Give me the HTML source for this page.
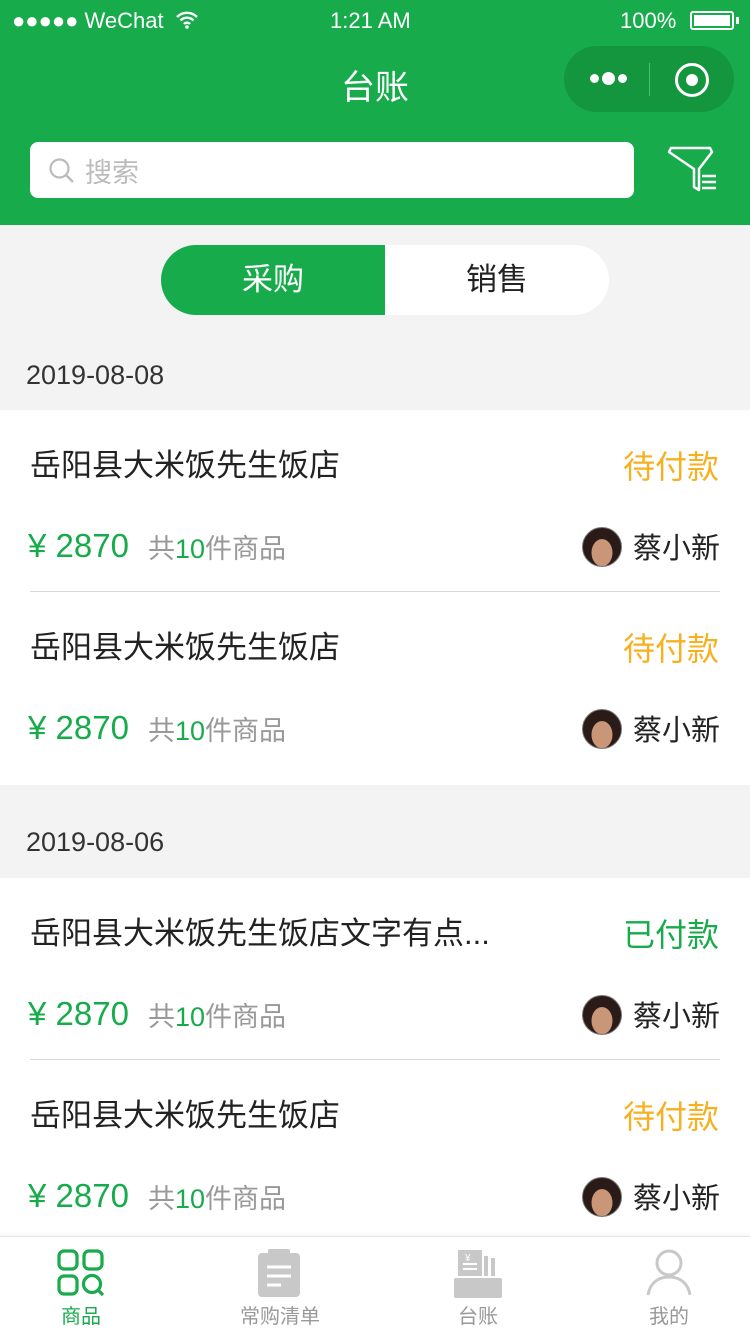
<!DOCTYPE html>
<html><head><meta charset="utf-8"><style>
*{margin:0;padding:0;box-sizing:border-box}
body{width:750px;height:1334px;overflow:hidden;background:#f3f3f3;font-family:"Liberation Sans","Noto Sans CJK SC",sans-serif;position:relative}
.abs{position:absolute}
.hdr{left:0;top:0;width:750px;height:225px;background:#17ab4b;color:#fff}
.item{position:absolute;left:0;width:750px;height:182px}
.t{position:absolute;left:30px;top:30px;font-size:31px;color:#222;white-space:nowrap}
.st{position:absolute;right:31px;top:32px;font-size:32px}
.pr{position:absolute;left:28px;top:117px;font-size:33px;color:#17ab4b}
.cnt{position:absolute;left:148px;top:117px;font-size:27px;color:#999}
.cnt b{font-weight:normal;color:#17ab4b}
.av{position:absolute;left:582px;top:117px;width:40px;height:40px;border-radius:50%;background:radial-gradient(ellipse at 50% 65%,#c99677 0 38%,#2a1a18 40%);border:1px solid #777}
.nm{position:absolute;right:30px;top:115px;font-size:29px;color:#222}
.div{position:absolute;left:30px;right:30px;bottom:0;height:1px;background:#d8d8d8}
.date{position:absolute;left:26px;font-size:27px;color:#333}
.tab{position:absolute;top:1300px;font-size:20px;color:#999;width:120px;text-align:center}
</style></head><body>
<div class="abs hdr">
 <div class="abs" style="left:12px;top:8px;font-size:22px;letter-spacing:0">●●●●● WeChat</div>
 <svg class="abs" style="left:175px;top:11px" width="24" height="18" viewBox="0 0 24 18"><path d="M2 6a14 14 0 0 1 20 0M5.5 9.5a9 9 0 0 1 13 0M9 13a4 4 0 0 1 6 0" stroke="#fff" stroke-width="2.4" fill="none"/><circle cx="12" cy="16" r="1.8" fill="#fff"/></svg>
 <div class="abs" style="left:330px;top:8px;font-size:22px">1:21 AM</div>
 <div class="abs" style="left:620px;top:8px;font-size:22px">100%</div>
 <div class="abs" style="left:690px;top:11px;width:44px;height:19px;border:2px solid #fff;border-radius:3px;padding:2px"><div style="background:#fff;width:100%;height:100%"></div></div>
 <div class="abs" style="left:736px;top:17px;width:3px;height:7px;background:#fff"></div>
 <div class="abs" style="left:0;width:750px;top:60px;text-align:center;font-size:34px">台账</div>
 <div class="abs" style="left:564px;top:46px;width:170px;height:66px;border-radius:33px;background:#14963f"></div>
 <div class="abs" style="left:590px;top:74px;width:9px;height:9px;border-radius:50%;background:#fff"></div>
 <div class="abs" style="left:602px;top:72px;width:13px;height:13px;border-radius:50%;background:#fff"></div>
 <div class="abs" style="left:618px;top:74px;width:9px;height:9px;border-radius:50%;background:#fff"></div>
 <div class="abs" style="left:649px;top:63px;width:1px;height:33px;background:#4cbf74"></div>
 <div class="abs" style="left:675px;top:63px;width:34px;height:34px;border-radius:50%;border:3.5px solid #fff"></div>
 <div class="abs" style="left:686px;top:74px;width:12px;height:12px;border-radius:50%;background:#fff"></div>
 <div class="abs" style="left:30px;top:142px;width:604px;height:56px;background:#fff;border-radius:8px"></div>
 <svg class="abs" style="left:48px;top:157px" width="28" height="28" viewBox="0 0 28 28"><circle cx="11.5" cy="11.5" r="9" stroke="#bbb" stroke-width="2.2" fill="none"/><path d="M18 18l7 7" stroke="#bbb" stroke-width="2.4"/></svg>
 <div class="abs" style="left:85px;top:151px;font-size:27px;color:#bbb">搜索</div>
 <svg class="abs" style="left:666px;top:144px" width="54" height="50" viewBox="0 0 54 50"><path d="M5 4h39l2 4-13 17v21l-5-3V25L3 8z" stroke="#fff" stroke-width="2.5" fill="none" stroke-linejoin="round"/><path d="M36 32h14M36 38h14M36 44h14" stroke="#fff" stroke-width="2.5"/></svg>
</div>
<div class="abs" style="left:161px;top:245px;width:448px;height:70px;border-radius:35px;background:#fff;overflow:hidden">
 <div style="position:absolute;left:0;top:0;width:224px;height:70px;background:#17ab4b;color:#fff;font-size:31px;text-align:center;line-height:70px">采购</div>
 <div style="position:absolute;left:224px;top:0;width:224px;height:70px;color:#222;font-size:31px;text-align:center;line-height:70px">销售</div>
</div>
<div class="date" style="top:360px">2019-08-08</div>
<div class="abs" style="left:0;top:410px;width:750px;height:375px;background:#fff"></div>
<div class="item" style="top:410px"><div class="t">岳阳县大米饭先生饭店</div><div class="st" style="color:#f7b020">待付款</div><div class="pr">¥ 2870</div><div class="cnt">共<b>10</b>件商品</div><div class="av"></div><div class="nm">蔡小新</div><div class="div"></div></div>
<div class="item" style="top:592px"><div class="t">岳阳县大米饭先生饭店</div><div class="st" style="color:#f7b020">待付款</div><div class="pr">¥ 2870</div><div class="cnt">共<b>10</b>件商品</div><div class="av"></div><div class="nm">蔡小新</div></div>
<div class="date" style="top:827px">2019-08-06</div>
<div class="abs" style="left:0;top:878px;width:750px;height:360px;background:#fff"></div>
<div class="item" style="top:878px"><div class="t">岳阳县大米饭先生饭店文字有点...</div><div class="st" style="color:#17ab4b">已付款</div><div class="pr">¥ 2870</div><div class="cnt">共<b>10</b>件商品</div><div class="av"></div><div class="nm">蔡小新</div><div class="div"></div></div>
<div class="item" style="top:1060px"><div class="t">岳阳县大米饭先生饭店</div><div class="st" style="color:#f7b020">待付款</div><div class="pr">¥ 2870</div><div class="cnt">共<b>10</b>件商品</div><div class="av"></div><div class="nm">蔡小新</div></div>
<div class="abs" style="left:0;top:1236px;width:750px;height:98px;background:#fff;border-top:1px solid #e6e6e6;box-shadow:0 -2px 3px rgba(0,0,0,.04)"></div>
<svg class="abs" style="left:56px;top:1248px" width="50" height="50" viewBox="0 0 50 50" fill="none" stroke="#17ab4b" stroke-width="3.2"><rect x="3" y="3" width="18" height="18" rx="5"/><rect x="28" y="3" width="18" height="18" rx="5"/><rect x="3" y="28" width="18" height="18" rx="5"/><circle cx="36" cy="36" r="8.5"/><path d="M42 42l5 5"/></svg>
<svg class="abs" style="left:256px;top:1249px" width="46" height="48" viewBox="0 0 46 48"><rect x="2" y="4" width="42" height="44" rx="4" fill="#c8c8c8"/><rect x="12" y="0" width="22" height="8" rx="2" fill="#c8c8c8"/><path d="M11 18h24M11 27h24M11 36h14" stroke="#fff" stroke-width="3"/></svg>
<svg class="abs" style="left:454px;top:1248px" width="48" height="50" viewBox="0 0 48 50"><path d="M4 2h24v26H4z" fill="#c8c8c8"/><path d="M30 8h4v20h-4zM37 10h4v18h-4z" fill="#c8c8c8"/><rect x="0" y="30" width="48" height="20" rx="2" fill="#c8c8c8"/><path d="M9 16h14M9 21h14" stroke="#fff" stroke-width="2"/><text x="11" y="13" font-size="10" fill="#fff">¥</text></svg>
<svg class="abs" style="left:646px;top:1248px" width="46" height="48" viewBox="0 0 46 48" fill="none" stroke="#c8c8c8" stroke-width="3"><circle cx="23" cy="15" r="12"/><path d="M2 47c2-12 10-18 21-18s19 6 21 18"/></svg>
<div class="tab" style="left:21px;color:#17ab4b">商品</div>
<div class="tab" style="left:220px">常购清单</div>
<div class="tab" style="left:418px">台账</div>
<div class="tab" style="left:609px">我的</div>
</body></html>
